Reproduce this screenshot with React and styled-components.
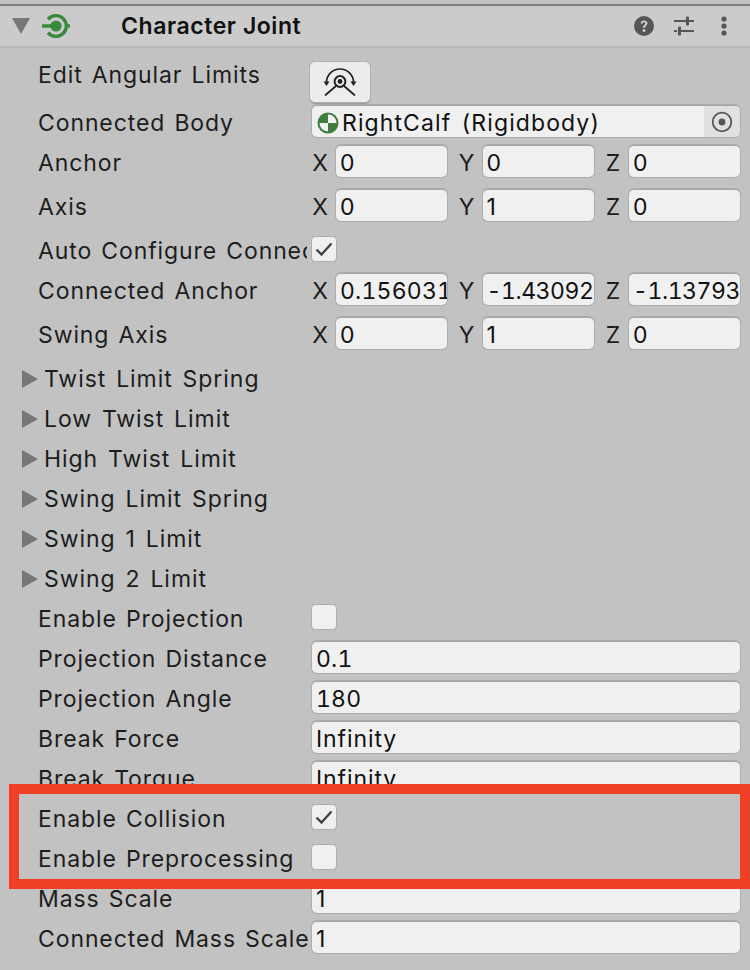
import React from "react";
import styled, { createGlobalStyle } from "styled-components";

const Global = createGlobalStyle`
  html, body { margin: 0; padding: 0; background: #c2c2c2; }
  body { font-family: Inter, "Noto Sans", sans-serif; }
`;

const Panel = styled.div`
  position: relative;
  width: 750px;
  height: 970px;
  overflow: hidden;
  background: #c2c2c2;
  color: #1d1d1d;
  font-size: 23px;
  letter-spacing: 0.9px;
  word-spacing: 1.8px;
`;

const TopRule = styled.div`
  height: 4px;
  background: #c2c2c2;
  border-bottom: 2px solid #7e7e7e;
`;

const Header = styled.header`
  display: flex;
  align-items: center;
  height: 40px;
  padding: 0 23px 0 12px;
  background: #cbcbcb;
  border-bottom: 2px solid #b7b7b7;
`;

const Title = styled.div`
  flex: 1;
  margin-left: 51px;
  font-weight: 600;
  letter-spacing: 0.57px;
  word-spacing: 0;
  color: #111;
`;

const HeaderIcons = styled.div`
  display: flex;
  align-items: center;
  gap: 20px;
`;

const Body = styled.div`
  display: flex;
  flex-direction: column;
  padding-top: 7px;
`;

const Row = styled.div`
  display: flex;
  align-items: center;
  height: 40px;
  padding: 0 10px 0 38px;
  margin-top: ${(p) => p.$gap || 0}px;
`;

const Label = styled.div`
  width: ${(p) => p.$clip || 274}px;
  margin-right: ${(p) => (p.$clip ? 274 - p.$clip : 0)}px;
  flex: none;
  white-space: nowrap;
  overflow: hidden;
`;

const Control = styled.div`
  flex: 1;
  min-width: 0;
  display: flex;
  align-items: center;
  margin-bottom: 4px;
`;

const Field = styled.div`
  flex: 1;
  min-width: 0;
  height: 32px;
  box-sizing: border-box;
  padding: 3px 0 0 4px;
  display: flex;
  align-items: center;
  background: #f0f0f0;
  border-radius: 5px;
  box-shadow: 0 0 0 1px #adadad;
  border-top: 1px solid #a5a5a5;
  white-space: nowrap;
  overflow: hidden;
  color: #111;
  font-variant-numeric: ${(p) => (p.$number ? "tabular-nums" : "normal")};
  letter-spacing: ${(p) => (p.$negative ? "-0.45px" : p.$number ? "0.2px" : "inherit")};
`;

const Vector = styled.div`
  flex: 1;
  min-width: 0;
  display: grid;
  grid-template-columns: repeat(3, minmax(0, 1fr));
  column-gap: 11.5px;
`;

const Axis = styled.div`
  display: flex;
  align-items: center;
  min-width: 0;
  gap: 8px;
`;

const AxisName = styled.span`
  width: 16px;
  flex: none;
  padding-top: 3px;
  text-align: center;
  letter-spacing: 0;
`;

const Check = styled.div`
  width: 24px;
  height: 24px;
  background: #f0f0f0;
  border-radius: 4px;
  box-shadow: 0 0 0 1px #adadad;
  display: flex;
  align-items: center;
  justify-content: center;
`;

const LimitsButton = styled.button`
  width: 60px;
  height: 40px;
  padding: 0;
  margin: 17px 0 0 -2px;
  border: none;
  border-radius: 5px;
  background: #ececec;
  box-shadow: 0 0 0 1px #b0b0b0, 0 1px 0 1px #9b9b9b;
  display: flex;
  align-items: center;
  justify-content: center;
`;

const ObjectField = styled(Field)`
  padding: 3px 0 0 5px;
  gap: 3px;
`;

const ObjectName = styled.span`
  flex: 1;
  letter-spacing: 1.1px;
  word-spacing: 3px;
`;

const Picker = styled.div`
  width: 36px;
  height: 34px;
  margin-top: -3px;
  background: #e0e0e0;
  display: flex;
  align-items: center;
  justify-content: center;
`;

const FoldRow = styled.div`
  display: flex;
  align-items: center;
  height: 40px;
  padding-left: 22px;
  gap: 6px;
  letter-spacing: 0.95px;
  word-spacing: 2.5px;
`;

const Spacer = styled.div`
  height: 4px;
`;

const Highlight = styled.div`
  position: absolute;
  left: 9px;
  top: 784px;
  width: 741px;
  height: 105px;
  box-sizing: border-box;
  border: 10px solid #ef4026;
  pointer-events: none;
`;

const Arrow = ({ down }) => (
  <svg width={down ? 18 : 16} height={18} viewBox={down ? "0 0 18 18" : "0 0 16 18"} style={{ flex: "none" }}>
    {down ? <path d="M0 1H18L9 17Z" fill="#777" /> : <path d="M0 0L16 9L0 18Z" fill="#777" />}
  </svg>
);

const JointIcon = () => (
  <svg width="28" height="24" viewBox="0 0 28 24" style={{ marginLeft: 12, flex: "none" }}>
    <g fill="none" stroke="#3a8a3c" strokeWidth="3.4">
      <path d="M6 5.3A10.4 10.4 0 1 1 6 18.7" />
      <path d="M0 12H10M23 12H28" />
    </g>
    <circle cx="14" cy="12" r="5.6" fill="#3a8a3c" />
  </svg>
);

const HelpIcon = () => (
  <svg width="20" height="20" viewBox="0 0 20 20">
    <circle cx="10" cy="10" r="10" fill="#565656" />
    <path d="M6.6 7.6C6.7 5.5 8.2 4.4 10.1 4.4C12.1 4.4 13.5 5.6 13.5 7.3C13.5 9.4 11 9.6 11 11.8H8.9C8.9 9 11.2 8.9 11.2 7.4C11.2 6.7 10.8 6.3 10.1 6.3C9.3 6.3 8.9 6.9 8.8 7.6Z" fill="#cbcbcb" />
    <circle cx="10" cy="14.5" r="1.5" fill="#cbcbcb" />
  </svg>
);

const SlidersIcon = () => (
  <svg width="20" height="20" viewBox="0 0 20 20">
    <path d="M0 5H12M15 5H20M0 15H3M7 15H20" stroke="#565656" strokeWidth="2" fill="none" />
    <rect x="12" y="0.5" width="3" height="9" rx="1.2" fill="#565656" />
    <rect x="4" y="10.5" width="3" height="9" rx="1.2" fill="#565656" />
  </svg>
);

const DotsIcon = () => (
  <svg width="6" height="20" viewBox="0 0 6 20" style={{ marginLeft: 7 }}>
    <circle cx="3" cy="3" r="2.6" fill="#565656" />
    <circle cx="3" cy="10" r="2.6" fill="#565656" />
    <circle cx="3" cy="17" r="2.6" fill="#565656" />
  </svg>
);

const LimitsIcon = () => (
  <svg width="34" height="28" viewBox="0 0 34 28">
    <g fill="none" stroke="#222">
      <path d="M3.5 14.5A13.5 13.5 0 0 1 30.5 14.5" strokeWidth="1.7" />
      <circle cx="17" cy="13.5" r="5.4" strokeWidth="2" />
      <circle cx="17" cy="13.5" r="2.4" fill="#222" strokeWidth="0" />
      <path d="M13 18L2 27.5M21 18L32 27.5" strokeWidth="1.8" />
    </g>
    <path d="M0.5 13.5H6.5L3.5 18ZM27.5 13.5H33.5L30.5 18Z" fill="#222" />
  </svg>
);

const BodyIcon = () => (
  <svg width="22" height="22" viewBox="0 0 22 22" style={{ flex: "none" }}>
    <circle cx="11" cy="11" r="10.5" fill="#3f7f3d" />
    <path d="M11 2.5A8.5 8.5 0 0 1 19.5 11H11ZM11 19.5A8.5 8.5 0 0 1 2.5 11H11Z" fill="#f2f2f2" />
  </svg>
);

const PickerIcon = () => (
  <svg width="22" height="22" viewBox="0 0 22 22">
    <circle cx="11" cy="11" r="9.3" fill="none" stroke="#555" strokeWidth="1.8" />
    <circle cx="11" cy="11" r="3.4" fill="#555" />
  </svg>
);

const Tick = () => (
  <svg width="18" height="15" viewBox="0 0 18 15">
    <path d="M1.5 7.5L6.5 12.5L16.5 1.5" fill="none" stroke="#444" strokeWidth="2.4" />
  </svg>
);

const VectorField = ({ values }) => (
  <Vector>
    {["X", "Y", "Z"].map((axis, i) => (
      <Axis key={axis}>
        <AxisName>{axis}</AxisName>
        <Field $number={values[i].length > 1} $negative={values[i].startsWith("-")}>{values[i]}</Field>
      </Axis>
    ))}
  </Vector>
);

const foldouts = ["Twist Limit Spring", "Low Twist Limit", "High Twist Limit", "Swing Limit Spring", "Swing 1 Limit", "Swing 2 Limit"];

export default function App() {
  return (
    <Panel>
      <Global />
      <TopRule />
      <Header>
        <Arrow down />
        <JointIcon />
        <Title>Character Joint</Title>
        <HeaderIcons>
          <HelpIcon />
          <SlidersIcon />
          <DotsIcon />
        </HeaderIcons>
      </Header>
      <Body>
        <Row>
          <Label>Edit Angular Limits</Label>
          <Control><LimitsButton aria-label="Edit Angular Limits"><LimitsIcon /></LimitsButton></Control>
        </Row>
        <Row $gap={8}>
          <Label>Connected Body</Label>
          <Control>
            <ObjectField>
              <BodyIcon />
              <ObjectName>RightCalf (Rigidbody)</ObjectName>
              <Picker><PickerIcon /></Picker>
            </ObjectField>
          </Control>
        </Row>
        <Row>
          <Label>Anchor</Label>
          <Control><VectorField values={["0", "0", "0"]} /></Control>
        </Row>
        <Row $gap={4}>
          <Label>Axis</Label>
          <Control><VectorField values={["0", "1", "0"]} /></Control>
        </Row>
        <Row $gap={4}>
          <Label $clip={269}>Auto Configure Connected Anchor</Label>
          <Control><Check><Tick /></Check></Control>
        </Row>
        <Row>
          <Label>Connected Anchor</Label>
          <Control><VectorField values={["0.1560316", "-1.430926", "-1.13793"]} /></Control>
        </Row>
        <Row $gap={4}>
          <Label>Swing Axis</Label>
          <Control><VectorField values={["0", "1", "0"]} /></Control>
        </Row>
        <Spacer />
        {foldouts.map((name) => (
          <FoldRow key={name}><Arrow />{name}</FoldRow>
        ))}
        <Row>
          <Label>Enable Projection</Label>
          <Control><Check /></Control>
        </Row>
        <Row>
          <Label>Projection Distance</Label>
          <Control><Field $number>0.1</Field></Control>
        </Row>
        <Row>
          <Label>Projection Angle</Label>
          <Control><Field $number>180</Field></Control>
        </Row>
        <Row>
          <Label>Break Force</Label>
          <Control><Field>Infinity</Field></Control>
        </Row>
        <Row>
          <Label>Break Torque</Label>
          <Control><Field>Infinity</Field></Control>
        </Row>
        <Row>
          <Label>Enable Collision</Label>
          <Control><Check><Tick /></Check></Control>
        </Row>
        <Row>
          <Label>Enable Preprocessing</Label>
          <Control><Check /></Control>
        </Row>
        <Row>
          <Label>Mass Scale</Label>
          <Control><Field>1</Field></Control>
        </Row>
        <Row>
          <Label>Connected Mass Scale</Label>
          <Control><Field>1</Field></Control>
        </Row>
      </Body>
      <Highlight />
    </Panel>
  );
}
